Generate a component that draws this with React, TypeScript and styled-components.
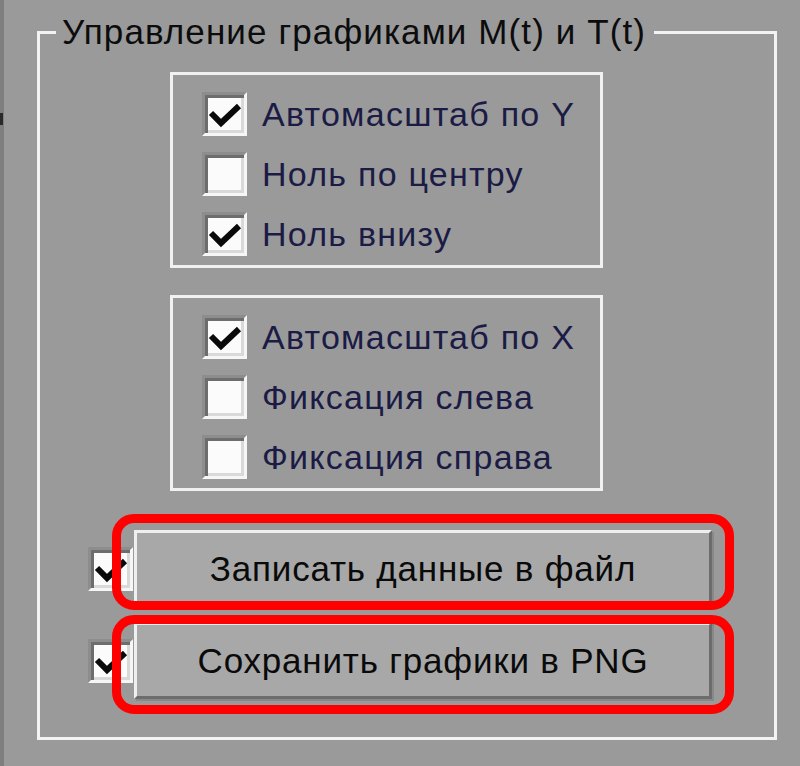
import React from "react";
import styled, { createGlobalStyle } from "styled-components";

const GlobalStyle = createGlobalStyle`
  body {
    margin: 0;
    background: #9a9a9a;
    font-family: "Liberation Sans", Arial, sans-serif;
  }
`;

const Screen = styled.div`
  display: flex;
  width: 800px;
  height: 766px;
  background: #9a9a9a;
  overflow: hidden;
`;

const EdgeStrip = styled.div`
  position: relative;
  width: 4px;
  background: #7f7f7f;
  &::after {
    content: "";
    position: absolute;
    left: 0;
    top: 113px;
    width: 3px;
    height: 12px;
    background: #2a2a2a;
  }
`;

const Panel = styled.div`
  flex: 1;
  padding: 12px 0 0 33px;
`;

const GroupBox = styled.fieldset`
  box-sizing: border-box;
  width: 740px;
  margin: 0;
  padding: 0 0 23px 0;
  border: 3px solid #f3f3f3;
`;

const Legend = styled.legend`
  margin-left: 16px;
  padding: 0 8px 0 6px;
  font-size: 35px;
  line-height: 40px;
  letter-spacing: 1.1px;
  color: #0c0c0c;
`;

const OptionGroup = styled.div<{ $top: number }>`
  box-sizing: border-box;
  width: 433px;
  margin: ${(p) => p.$top}px 0 0 130px;
  padding: 17px 0 9px 29px;
  border: 3px solid #f1f1f1;
  display: flex;
  flex-direction: column;
  gap: 16px;
`;

const OptionRow = styled.label`
  display: flex;
  align-items: center;
  height: 44px;
`;

const Box = styled.span`
  position: relative;
  flex: none;
  box-sizing: border-box;
  width: 45px;
  height: 44px;
  background: #fbfbfb;
  border: 3px solid;
  border-color: #8d8d8d #f6f6f6 #f6f6f6 #8d8d8d;
  box-shadow: inset 3px 3px 0 #6d6d6d, inset -3px -3px 0 #d9d9d9;

  svg {
    position: absolute;
    left: 0;
    top: 0;
  }
`;

const OptionText = styled.span`
  margin-left: 15px;
  font-size: 34px;
  letter-spacing: 1.25px;
  color: #1b1b45;
  white-space: nowrap;
`;

const ButtonRow = styled.div<{ $top: number; $padTop: number; $padBottom: number }>`
  position: relative;
  display: flex;
  align-items: center;
  width: 646px;
  margin: ${(p) => p.$top}px 0 0 48px;
  padding: ${(p) => p.$padTop}px 0 ${(p) => p.$padBottom}px 0;
`;

const ActionButton = styled.button`
  box-sizing: border-box;
  width: 578px;
  height: 77px;
  margin-left: 1px;
  padding: 0;
  background: #a8a8a8;
  border: 3px solid;
  border-color: #efefef #6c6c6c #6c6c6c #efefef;
  box-shadow: 2px 2px 0 #888888;
  font-family: "Liberation Sans", Arial, sans-serif;
  font-size: 35px;
  letter-spacing: 0.8px;
  color: #0a0a0a;
`;

const Highlight = styled.span`
  position: absolute;
  left: 24px;
  right: 0;
  top: 0;
  bottom: 0;
  border: 9px solid #ff0000;
  border-radius: 22px;
  pointer-events: none;
`;

function Check({ checked }: { checked: boolean }) {
  return (
    <Box>
      {checked && (
        <svg width="39" height="38" viewBox="0 0 39 38">
          <polyline
            points="6,18 16,28 34,11"
            fill="none"
            stroke="#0a0a0a"
            strokeWidth="6"
            strokeLinejoin="miter"
          />
        </svg>
      )}
    </Box>
  );
}

const yOptions = [
  { text: "Автомасштаб по Y", checked: true },
  { text: "Ноль по центру", checked: false },
  { text: "Ноль внизу", checked: true },
];

const xOptions = [
  { text: "Автомасштаб по X", checked: true },
  { text: "Фиксация слева", checked: false },
  { text: "Фиксация справа", checked: false },
];

export default function App() {
  return (
    <Screen>
      <GlobalStyle />
      <EdgeStrip />
      <Panel>
        <GroupBox>
          <Legend>Управление графиками M(t) и T(t)</Legend>
          <OptionGroup $top={20}>
            {yOptions.map((o) => (
              <OptionRow key={o.text}>
                <Check checked={o.checked} />
                <OptionText>{o.text}</OptionText>
              </OptionRow>
            ))}
          </OptionGroup>
          <OptionGroup $top={27}>
            {xOptions.map((o) => (
              <OptionRow key={o.text}>
                <Check checked={o.checked} />
                <OptionText>{o.text}</OptionText>
              </OptionRow>
            ))}
          </OptionGroup>
          <ButtonRow $top={23} $padTop={16} $padBottom={3}>
            <Check checked />
            <ActionButton>Записать данные в файл</ActionButton>
            <Highlight />
          </ButtonRow>
          <ButtonRow $top={5} $padTop={7} $padBottom={15}>
            <Check checked />
            <ActionButton>Сохранить графики в PNG</ActionButton>
            <Highlight />
          </ButtonRow>
        </GroupBox>
      </Panel>
    </Screen>
  );
}
